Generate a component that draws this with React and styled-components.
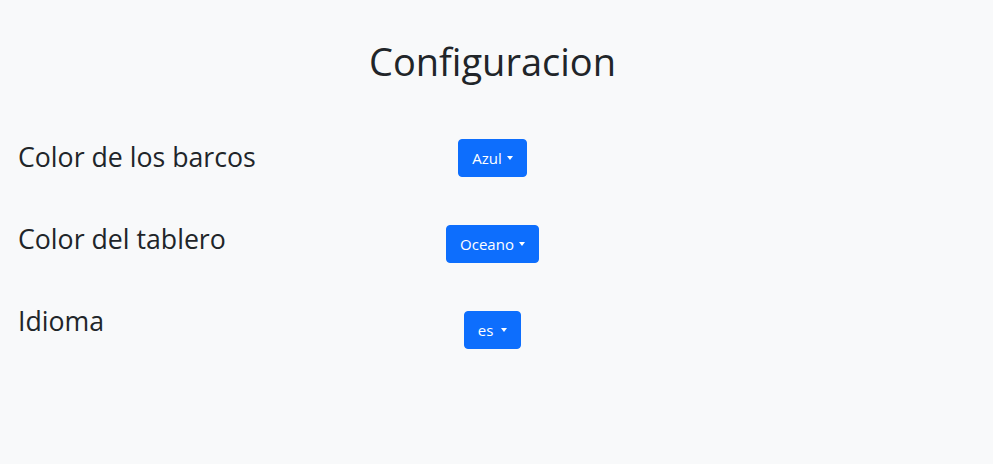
import React from "react";
import styled, { createGlobalStyle } from "styled-components";

const Global = createGlobalStyle`
  html, body { margin: 0; padding: 0; background: #f8f9fa; }
  body {
    font-family: "Open Sans", "Noto Sans", sans-serif;
    color: #212529;
    -webkit-font-smoothing: antialiased;
  }
`;

const Page = styled.main`
  box-sizing: border-box;
  width: 985px;
  min-height: 464px;
  padding-top: 38px;
`;

const Title = styled.h1`
  margin: 0;
  height: 101px;
  text-align: center;
  font-size: 38px;
  font-weight: 400;
  line-height: 46px;
`;

const Settings = styled.section`
  display: grid;
  grid-template-columns: 1fr auto 1fr;
  align-items: start;
`;

const Labels = styled.div`
  display: flex;
  flex-direction: column;
  gap: 50px;
  padding-left: 18px;
  padding-top: 2px;
`;

const Label = styled.h3`
  margin: 0;
  font-size: 26.7px;
  font-weight: 400;
  line-height: 32px;
  white-space: nowrap;
`;

const Controls = styled.div`
  display: flex;
  flex-direction: column;
  align-items: center;
  gap: 48px;
`;

const Toggle = styled.button`
  display: inline-flex;
  align-items: center;
  box-sizing: border-box;
  height: 38px;
  padding: 0 13px;
  border: 1px solid #0d6efd;
  border-radius: 4px;
  background: #0d6efd;
  color: #fff;
  font-family: "Open Sans", "Noto Sans", sans-serif;
  font-size: 15px;
  line-height: 1;
  cursor: pointer;
`;

const Caret = styled.span`
  display: inline-block;
  margin-left: ${(p) => p.$gap}px;
  width: 0;
  height: 0;
  border-top: 4px solid #fff;
  border-left: 3.5px solid transparent;
  border-right: 3.5px solid transparent;
`;

const rows = [
  { label: "Color de los barcos", value: "Azul", gap: 5 },
  { label: "Color del tablero", value: "Oceano", gap: 5 },
  { label: "Idioma", value: "es", gap: 8 },
];

export default function App() {
  return (
    <>
      <Global />
      <Page>
        <Title>Configuracion</Title>
        <Settings>
          <Labels>
            {rows.map((r) => (
              <Label key={r.label}>{r.label}</Label>
            ))}
          </Labels>
          <Controls>
            {rows.map((r) => (
              <Toggle key={r.value} type="button">
                {r.value}
                <Caret $gap={r.gap} />
              </Toggle>
            ))}
          </Controls>
          <div />
        </Settings>
      </Page>
    </>
  );
}
